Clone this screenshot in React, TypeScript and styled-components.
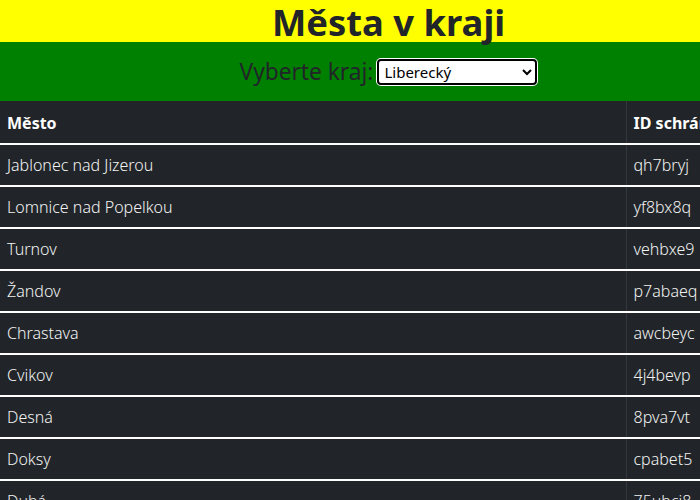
import React from "react";
import styled, { createGlobalStyle } from "styled-components";

const Global = createGlobalStyle`
  html, body { margin: 0; padding: 0; overflow: hidden; background: #fff; }
  body { font-family: "Noto Sans", "Open Sans", sans-serif; color: #212529; }
`;

const Page = styled.div`
  width: 777px;
`;

const TitleBar = styled.header`
  background: #ffff00;
  height: 42px;
  display: flex;
  align-items: center;
  justify-content: center;
`;

const Title = styled.h1`
  margin: 0;
  font-size: 36.4px;
  line-height: 42px;
  font-weight: 700;
  color: #212529;
  position: relative;
  top: 1px;
`;

const FilterBar = styled.div`
  background: #008000;
  height: 59px;
  display: flex;
  align-items: center;
  justify-content: center;
  gap: 4px;
`;

const Label = styled.label`
  font-size: 22.7px;
  color: #212529;
  line-height: 28px;
`;

const Select = styled.select`
  width: 160px;
  height: 26px;
  font-family: "Noto Sans", "Open Sans", sans-serif;
  font-size: 15px;
  color: #000;
  background: #fff;
  border: 2px solid #000;
  border-radius: 4px;
  box-shadow: 0 0 0 1px #fff;
  padding: 0 1px;
  margin-top: 1px;
`;

const Table = styled.table`
  width: 777px;
  border-collapse: collapse;
  background: #212529;
  color: #fff;
  table-layout: fixed;
`;

const HeadRow = styled.tr`
  height: 43px;
`;

const BodyRow = styled.tr`
  height: 42px;
`;

const HeadCell = styled.th<{ $w?: number }>`
  box-sizing: border-box;
  width: ${(p) => (p.$w ? `${p.$w}px` : "auto")};
  padding: 2px 7px 0;
  text-align: left;
  font-size: 16px;
  line-height: 24px;
  font-weight: 700;
  white-space: nowrap;
  overflow: hidden;
  border-bottom: 2px solid #fff;
  border-left: 1px solid #32383e;
  &:first-child { border-left: none; }
`;

const Cell = styled.td`
  padding: 0 7px;
  font-size: 16px;
  line-height: 24px;
  font-weight: 300;
  color: #f2f2f2;
  white-space: nowrap;
  border-bottom: 2px solid #fff;
  border-left: 1px solid #32383e;
  &:first-child { border-left: none; }
`;

const rows: [string, string][] = [
  ["Jablonec nad Jizerou", "qh7bryj"],
  ["Lomnice nad Popelkou", "yf8bx8q"],
  ["Turnov", "vehbxe9"],
  ["Žandov", "p7abaeq"],
  ["Chrastava", "awcbeyc"],
  ["Cvikov", "4j4bevp"],
  ["Desná", "8pva7vt"],
  ["Doksy", "cpabet5"],
  ["Dubá", "75ubcj8"],
];

export default function App() {
  return (
    <Page>
      <Global />
      <TitleBar>
        <Title>Města v kraji</Title>
      </TitleBar>
      <FilterBar>
        <Label htmlFor="kraj">Vyberte kraj:</Label>
        <Select id="kraj" defaultValue="Liberecký">
          <option>Liberecký</option>
          <option>Ústecký</option>
          <option>Královéhradecký</option>
        </Select>
      </FilterBar>
      <Table>
        <thead>
          <HeadRow>
            <HeadCell $w={626}>Město</HeadCell>
            <HeadCell>ID schránky</HeadCell>
          </HeadRow>
        </thead>
        <tbody>
          {rows.map(([m, id]) => (
            <BodyRow key={m}>
              <Cell>{m}</Cell>
              <Cell>{id}</Cell>
            </BodyRow>
          ))}
        </tbody>
      </Table>
    </Page>
  );
}
